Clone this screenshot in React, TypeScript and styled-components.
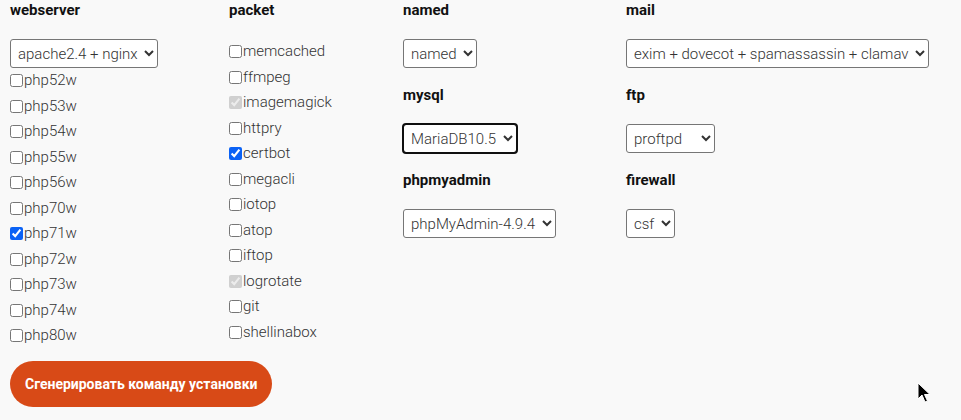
import React from "react"
import styled, { createGlobalStyle, css } from "styled-components"

const GlobalStyle = createGlobalStyle`
  html, body {
    margin: 0;
    padding: 0;
    background: #f9f9f9;
  }
  body {
    font-family: Roboto, "Liberation Sans", Arial, sans-serif;
    color: #333;
  }
`

const Page = styled.div`
  position: relative;
  min-height: 420px;
  padding: 0 10px;
  box-sizing: border-box;
`

const Columns = styled.div`
  display: grid;
  grid-template-columns: 219px 174px 223px auto;
  align-items: start;
`

const Column = styled.div`
  display: flex;
  flex-direction: column;
  align-items: flex-start;
`

const Heading = styled.div`
  font-size: 15px;
  font-weight: 700;
  line-height: 20px;
  color: #111;
  margin-bottom: 19px;
`

const Group = styled.div`
  display: flex;
  flex-direction: column;
  align-items: flex-start;
  margin-bottom: 17px;
`

interface SelectProps {
  $focused?: boolean
}

const Select = styled.select<SelectProps>`
  font-family: inherit;
  font-size: 15px;
  font-weight: 300;
  color: #333;
  height: 29px;
  padding: 0 3px;
  background: #fff;
  border: 1px solid #767676;
  border-radius: 3px;
  ${({ $focused }) =>
    $focused &&
    css`
      outline: 2px solid #101010;
      outline-offset: -1px;
    `};
`

const CheckList = styled.div`
  display: flex;
  flex-direction: column;
`

const CheckRow = styled.label`
  display: flex;
  align-items: center;
  font-size: 15px;
  font-weight: 300;
  line-height: 25.5px;
  height: 25.5px;
  color: #333;
`

const Box = styled.input`
  margin: 0 1px 0 0;
  width: 13px;
  height: 13px;
  accent-color: #0b62f5;
`

const Button = styled.button`
  margin-top: 12px;
  height: 46px;
  padding: 0 15px;
  border: none;
  border-radius: 23px;
  background: #d84a17;
  color: #fff;
  font-family: Roboto, "Liberation Sans", Arial, sans-serif;
  font-size: 14px;
  font-weight: 700;
  white-space: nowrap;
  cursor: pointer;
`

const Cursor = styled.svg`
  position: absolute;
  left: 917px;
  top: 382px;
  pointer-events: none;
`

interface Check {
  name: string
  checked?: boolean
  disabled?: boolean
}

const phpVersions: Check[] = [
  { name: "php52w" },
  { name: "php53w" },
  { name: "php54w" },
  { name: "php55w" },
  { name: "php56w" },
  { name: "php70w" },
  { name: "php71w", checked: true },
  { name: "php72w" },
  { name: "php73w" },
  { name: "php74w" },
  { name: "php80w" },
]

const packets: Check[] = [
  { name: "memcached" },
  { name: "ffmpeg" },
  { name: "imagemagick", checked: true, disabled: true },
  { name: "httpry" },
  { name: "certbot", checked: true },
  { name: "megacli" },
  { name: "iotop" },
  { name: "atop" },
  { name: "iftop" },
  { name: "logrotate", checked: true, disabled: true },
  { name: "git" },
  { name: "shellinabox" },
]

const Checks = ({ items }: { items: Check[] }) => (
  <CheckList>
    {items.map(item => (
      <CheckRow key={item.name}>
        <Box
          type="checkbox"
          defaultChecked={item.checked}
          disabled={item.disabled}
        />
        {item.name}
      </CheckRow>
    ))}
  </CheckList>
)

const SelectGroup = ({
  title,
  options,
  width,
  focused,
}: {
  title: string
  options: string[]
  width?: number
  focused?: boolean
}) => (
  <Group>
    <Heading>{title}</Heading>
    <Select $focused={focused} style={width ? { width } : undefined}>
      {options.map(o => (
        <option key={o}>{o}</option>
      ))}
    </Select>
  </Group>
)

const App = () => (
  <Page>
    <GlobalStyle />
    <Columns>
      <Column>
        <Heading>webserver</Heading>
        <Select>
          <option>apache2.4 + nginx</option>
          <option>nginx</option>
        </Select>
        <Checks items={phpVersions} />
        <Button>Сгенерировать команду установки</Button>
      </Column>
      <Column>
        <Heading>packet</Heading>
        <Checks items={packets} />
      </Column>
      <Column>
        <SelectGroup title="named" options={["named"]} />
        <SelectGroup title="mysql" options={["MariaDB10.5"]} focused />
        <SelectGroup title="phpmyadmin" options={["phpMyAdmin-4.9.4"]} />
      </Column>
      <Column>
        <SelectGroup
          title="mail"
          options={["exim + dovecot + spamassassin + clamav"]}
        />
        <SelectGroup title="ftp" options={["proftpd", "vsftpd"]} width={89} />
        <SelectGroup title="firewall" options={["csf"]} />
      </Column>
    </Columns>
    <Cursor width="14" height="22" viewBox="0 0 14 22">
      <path
        d="M1 1 L1 17 L5 13 L8 20 L10.5 19 L7.5 12.5 L13 12.5 Z"
        fill="#000"
        stroke="#fff"
        strokeWidth="1"
      />
    </Cursor>
  </Page>
)

export default App
